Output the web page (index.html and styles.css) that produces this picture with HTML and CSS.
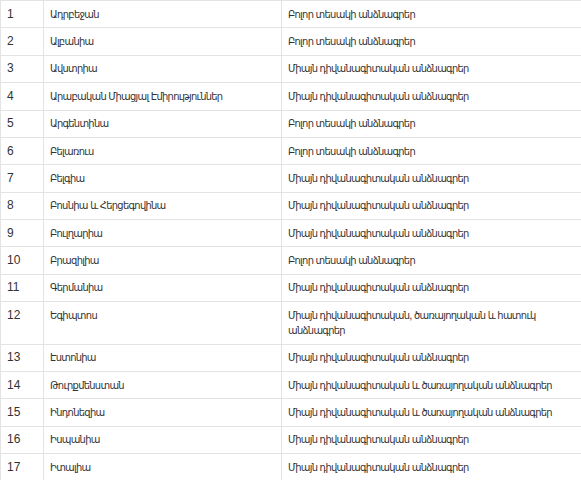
FILE: index.html
```html
<!DOCTYPE html>
<html lang="hy">
<head>
    <meta charset="UTF-8">
    <meta name="viewport" content="width=device-width, initial-scale=1.0">
    <title>Անձնագրեր</title>
    <link rel="stylesheet" href="styles.css">
</head>
<body>
    <table class="visa-table">
        <colgroup>
            <col class="col-num">
            <col class="col-country">
            <col class="col-type">
        </colgroup>
        <tbody></tbody>
    </table>

    <script>
        const rows = [
            ['Ադրբեջան', 'Բոլոր տեսակի անձնագրեր'],
            ['Ալբանիա', 'Բոլոր տեսակի անձնագրեր'],
            ['Ավստրիա', 'Միայն դիվանագիտական անձնագրեր'],
            ['Արաբական Միացյալ Էմիրություններ', 'Միայն դիվանագիտական անձնագրեր'],
            ['Արգենտինա', 'Բոլոր տեսակի անձնագրեր'],
            ['Բելառուս', 'Բոլոր տեսակի անձնագրեր'],
            ['Բելգիա', 'Միայն դիվանագիտական անձնագրեր'],
            ['Բոսնիա և Հերցեգովինա', 'Միայն դիվանագիտական անձնագրեր'],
            ['Բուլղարիա', 'Միայն դիվանագիտական անձնագրեր'],
            ['Բրազիլիա', 'Բոլոր տեսակի անձնագրեր'],
            ['Գերմանիա', 'Միայն դիվանագիտական անձնագրեր'],
            ['Եգիպտոս', 'Միայն դիվանագիտական, ծառայողական և հատուկ անձնագրեր'],
            ['Էստոնիա', 'Միայն դիվանագիտական անձնագրեր'],
            ['Թուրքմենստան', 'Միայն դիվանագիտական և ծառայողական անձնագրեր'],
            ['Ինդոնեզիա', 'Միայն դիվանագիտական և ծառայողական անձնագրեր'],
            ['Իսպանիա', 'Միայն դիվանագիտական անձնագրեր'],
            ['Իտալիա', 'Միայն դիվանագիտական անձնագրեր']
        ];

        const body = document.querySelector('.visa-table tbody');
        body.innerHTML = rows.map((r, i) =>
            `<tr><td>${i + 1}</td><td>${r[0]}</td><td>${r[1]}</td></tr>`
        ).join('');
    </script>
</body>
</html>
```

FILE: styles.css
```css
body {
    margin: 0;
    background-color: #fff;
    font-family: "Liberation Sans", "DejaVu Sans Condensed", sans-serif;
    font-size: 11px;
    letter-spacing: -0.7px;
    color: #333;
}
.visa-table {
    width: 100%;
    border-collapse: collapse;
    border-top: 1px solid #e3e3e3;
}
.col-num {
    width: 43px;
}
.col-country {
    width: 238px;
}
.visa-table td {
    padding: 5.7px 7px 5.7px 6px;
    line-height: 15px;
    vertical-align: top;
    border-left: 1px solid #e3e3e3;
    border-bottom: 1px solid #e3e3e3;
    text-align: left;
}
.visa-table td:first-child {
    font-size: 12px;
    letter-spacing: 0;
}
```
